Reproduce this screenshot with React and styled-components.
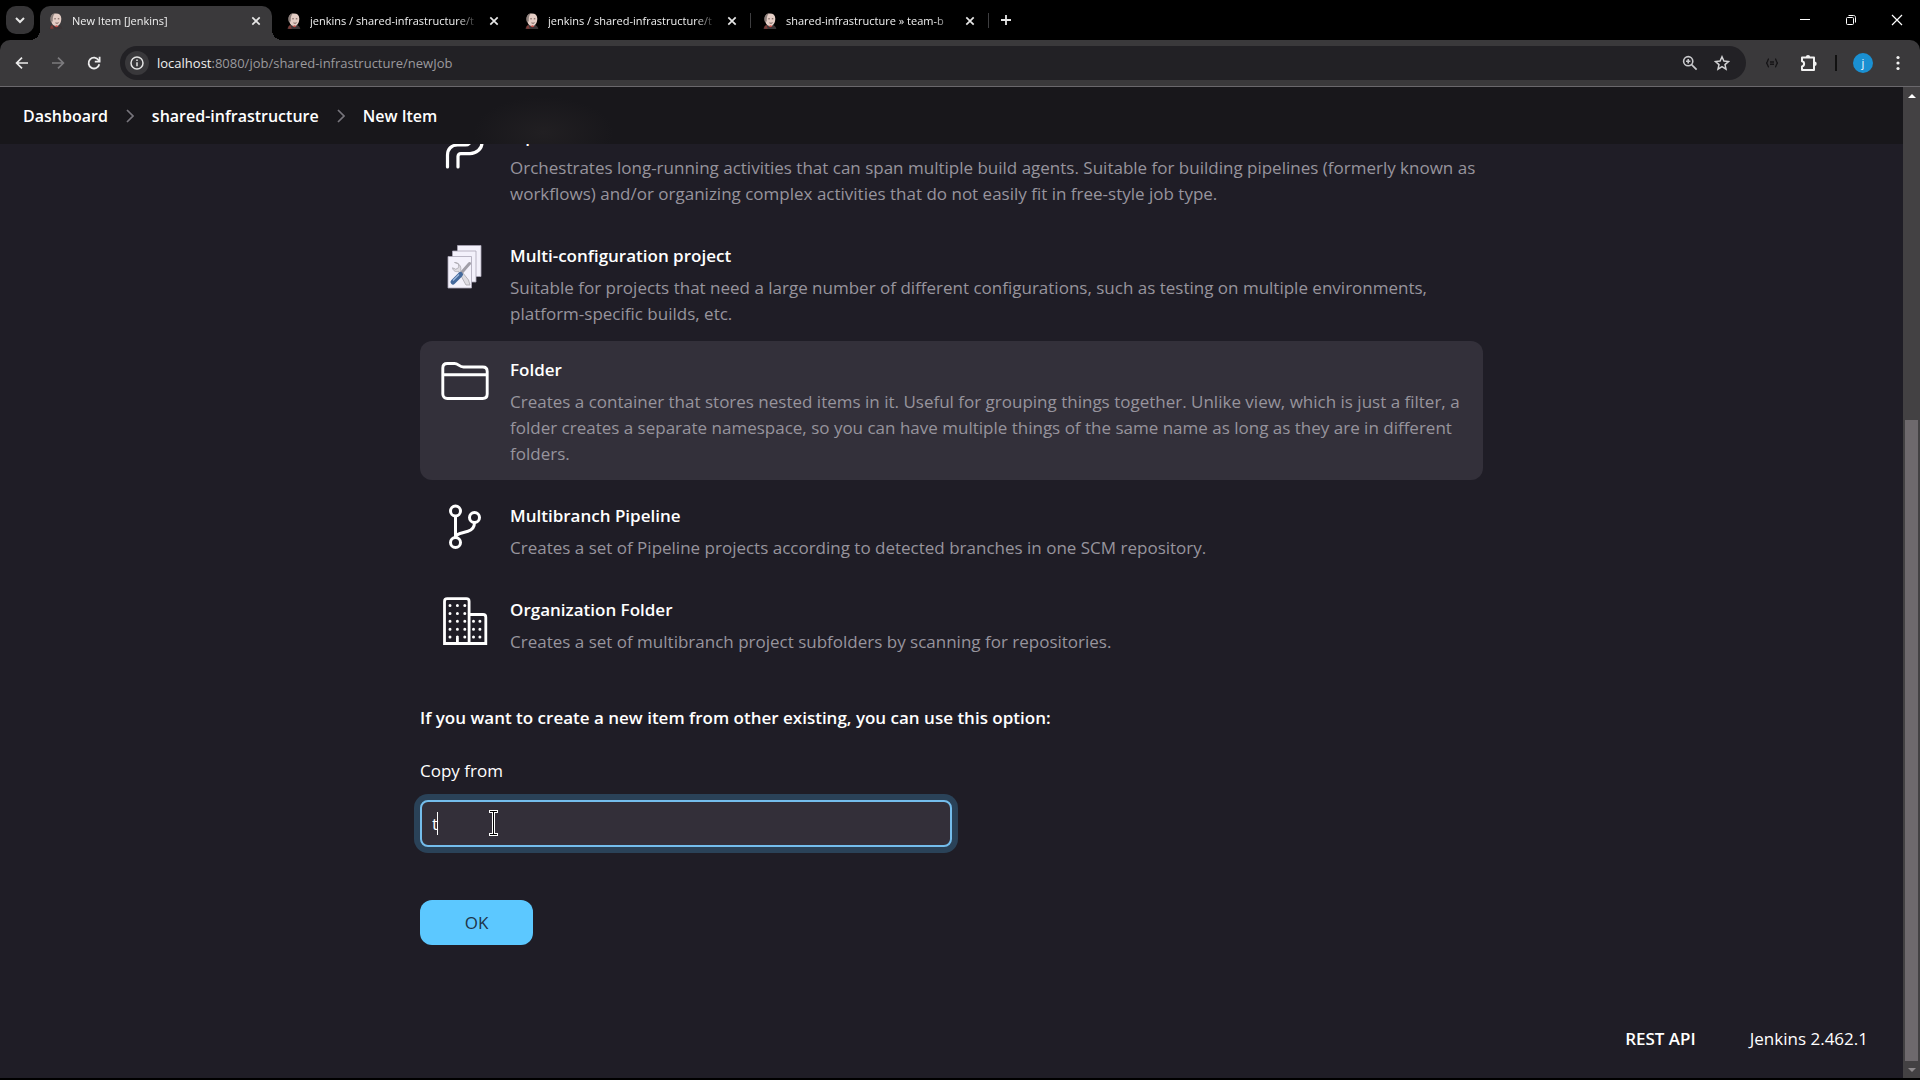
import { useState } from "react";
import styled, { createGlobalStyle } from "styled-components";

const tabs = [
  { id: 1, title: "New Item [Jenkins]", active: true },
  { id: 2, title: "jenkins / shared-infrastructure/t" },
  { id: 3, title: "jenkins / shared-infrastructure/t" },
  { id: 4, title: "shared-infrastructure » team-b" },
];

const Favicon = () => (
  <svg width="16" height="16" viewBox="0 0 16 16" aria-hidden="true">
    <path d="M1.5 16c.3-2.400 1.800-3.700 4-4.200h5c2 .6 3.400 1.800 3.800 4.200z" fill="#3a3436" />
    <path d="M2.200 15.800c0-2 .8-3.200 2.200-3.700l1.400 3.700z" fill="#7c3a36" />
    <path d="M2.800 5.200C2.800 2 5 .4 8 .4c3.400 0 5.300 1.900 5.300 5.200 0 4-1.900 7.600-5 7.600-3.200 0-5.500-3.600-5.500-8z" fill="#e4cdc5" />
    <path d="M2.600 8.500C1.600 4.300 3.400.7 7.300.3 5.400 1.800 4.600 3.800 4.800 8.500z" fill="#8c7f7b" />
    <path d="M6.300 5.800h1.500M9.800 5.800h1.500M7.500 9.900c1.200.5 2.200.4 3-.2" stroke="#5e4743" strokeWidth=".9" fill="none" />
    <path d="M6.300 13.200l2.200-1 2 1-1.900 1z" fill="#c9524c" />
  </svg>
);

const CloseIcon = () => (
  <svg width="10" height="10" viewBox="0 0 10 10" stroke="#e6e6e6" strokeWidth="1.700" aria-hidden="true">
    <path d="M1.300 1.300l7.400 7.400M8.700 1.300L1.300 8.700" />
  </svg>
);

const BackIcon = () => (
  <svg width="16" height="16" viewBox="0 0 16 16" fill="none" stroke="currentColor" strokeWidth="1.700" aria-hidden="true">
    <path d="M14 8H3M8 2.600L2.600 8 8 13.400" />
  </svg>
);

const ForwardIcon = () => (
  <svg width="16" height="16" viewBox="0 0 16 16" fill="none" stroke="currentColor" strokeWidth="1.700" aria-hidden="true">
    <path d="M2 8h11M8 2.600L13.400 8 8 13.400" />
  </svg>
);

const ReloadIcon = () => (
  <svg width="16" height="16" viewBox="0 0 16 16" fill="none" stroke="currentColor" strokeWidth="1.800" aria-hidden="true">
    <path d="M13.300 9.200A5.400 5.400 0 1 1 12.600 5.200L13.600 6.500" />
    <path d="M13.600 1.700v5H8.800" />
  </svg>
);

const InfoIcon = () => (
  <svg width="14" height="14" viewBox="0 0 14 14" fill="none" stroke="#e3e3e3" strokeWidth="1.500" aria-hidden="true">
    <circle cx="7" cy="7" r="6" />
    <path d="M7 6.300v4M7 3.600v1.400" />
  </svg>
);

const ZoomIcon = () => (
  <svg width="16" height="16" viewBox="0 0 16 16" fill="none" stroke="#c9c9cc" strokeWidth="1.600" aria-hidden="true">
    <circle cx="6.200" cy="6.200" r="4.600" />
    <path d="M9.600 9.600l5 5M6.200 4v4.400M4 6.200h4.400" />
  </svg>
);

const StarIcon = () => (
  <svg width="16" height="16" viewBox="0 0 16 16" fill="none" stroke="#d2d2d4" strokeWidth="1.500" aria-hidden="true">
    <path d="M8 1.800l1.900 4.300 4.600.4-3.500 3.100 1 4.500L8 11.700l-4 2.400 1-4.500L1.500 6.500l4.600-.4z" />
  </svg>
);

const BracesIcon = () => (
  <svg width="14" height="10" viewBox="0 0 14 10" fill="none" stroke="#161517" strokeWidth="1.400" aria-hidden="true">
    <path d="M4 1C2.200 1 3.200 5 1 5c2.200 0 1.200 4 3 4M10 1c1.800 0 .8 4 3 4-2.200 0-1.200 4-3 4M5 4h4M5 6.200h4" />
  </svg>
);

const PuzzleIcon = () => (
  <svg width="18" height="18" viewBox="0 0 18 18" fill="none" stroke="#f2f2f2" strokeWidth="2" aria-hidden="true">
    <path d="M2 3.500h12v12.500H2v-3.600c2.800-.4 2.800-4.800 0-5.200z" strokeLinejoin="round" />
    <path d="M5.800 3.200a2.200 2.200 0 0 1 4.400 0zM14.500 7.600a2.200 2.200 0 0 1 0 4.400z" fill="#f2f2f2" stroke="none" />
  </svg>
);

const PipelineIcon = () => (
  <svg width="48" height="48" viewBox="0 0 48 48" fill="none" stroke="#fff" strokeWidth="3.200" strokeLinecap="round" aria-hidden="true">
    <path d="M6.500 44V32c0-6 4-10 10-10h8c3 0 5-2 5-5V5" />
    <path d="M17 44V33.500c0-1.900 1-2.900 2.900-2.900H29c6 0 12-4.600 12-10.600V5" />
  </svg>
);

const MatrixIcon = () => (
  <svg width="48" height="48" viewBox="0 0 48 48" aria-hidden="true">
    <g fill="#f3f1fb" stroke="#a9a6b6" strokeWidth=".8">
      <path d="M16.500 2.500h23.500v31H16.500z" />
      <path d="M11.500 8h23.500v31H11.500z" />
      <path d="M7 13.500h23.500v31.500H7z" />
    </g>
    <path d="M13.500 19.500l4 1.500.3 3.500-3 1.800-3.300-1.500c.5 3.200 3.500 4.500 6 3.500L25 42h4l-1.500-5-7.800-9.800c1-4-2.500-8-6.200-7.700z" fill="#dedce2" stroke="#a7a5ac" strokeWidth=".8" />
    <path d="M28.500 20.500L18.500 32" stroke="#a09ea8" strokeWidth="3" strokeLinecap="round" />
    <path d="M19.500 31.500L12 39" stroke="#44699c" strokeWidth="5" strokeLinecap="round" />
    <path d="M18 31.500l-6 6" stroke="#9db8dc" strokeWidth="1.300" />
  </svg>
);

const FolderIcon = () => (
  <svg width="48" height="48" viewBox="0 0 48 48" fill="none" stroke="#fff" strokeWidth="2.900" strokeLinejoin="round" aria-hidden="true">
    <path d="M1.800 37V11c0-2.700 1.700-4.500 4.500-4.500h7.200c4 0 4.500 3.500 9 3.500h19.200c2.800 0 4.500 1.800 4.500 4.500V37c0 2.800-1.700 4.500-4.500 4.500H6.300c-2.800 0-4.500-1.700-4.500-4.500zM1.800 17.800h44.400" />
  </svg>
);

const BranchIcon = () => (
  <svg width="48" height="48" viewBox="0 0 48 48" fill="none" stroke="#fff" strokeWidth="3" aria-hidden="true">
    <circle cx="14.500" cy="8" r="5" />
    <circle cx="14.500" cy="39.500" r="5" />
    <circle cx="33.500" cy="14.500" r="5" />
    <path d="M14.500 13v21.500M33.500 19.500c0 4.500-2.500 7.500-6.500 8.700l-8 2.300c-3 .9-4.500 2.500-4.500 4" />
  </svg>
);

const BuildingIcon = () => (
  <svg width="48" height="48" viewBox="0 0 48 48" fill="none" stroke="#fff" strokeWidth="2.800" aria-hidden="true">
    <path d="M3.500 46.500V4.500c0-1.800 1-2.800 2.800-2.800h19c1.800 0 2.800 1 2.800 2.800v42zM28 17.500h14c1.800 0 2.800 1 2.800 2.800v26.200H28" />
    <path d="M9 8.500h15M9 16.500h15M9 24.300h15M9 32.200h15M9 40h15" strokeWidth="3" strokeDasharray="0 7.400" strokeLinecap="round" />
    <path d="M32.500 24.300h7M32.500 32.200h7M32.500 40h7" strokeWidth="3" strokeDasharray="0 6.400" strokeLinecap="round" />
    <path d="M16.400 41v5" />
  </svg>
);

const Chevron = () => (
  <svg width="8" height="14" viewBox="0 0 8 14" fill="none" stroke="#77757c" strokeWidth="1.700" aria-hidden="true">
    <path d="M1 1l6 6-6 6" />
  </svg>
);

const Pointer = () => (
  <svg width="11" height="28" viewBox="0 0 11 28" fill="none" aria-hidden="true">
    <path d="M1 2.500h9M1 25.500h9M5.500 2v24" stroke="#fff" strokeWidth="3" />
    <path d="M2 2.500h7M2 25.500h7M5.500 3v22" stroke="#000" strokeWidth="1" />
  </svg>
);

const items = [
  {
    name: "Pipeline",
    icon: <PipelineIcon />,
    text: "Orchestrates long-running activities that can span multiple build agents. Suitable for building pipelines (formerly known as workflows) and/or organizing complex activities that do not easily fit in free-style job type.",
  },
  {
    name: "Multi-configuration project",
    icon: <MatrixIcon />,
    tight: true,
    text: "Suitable for projects that need a large number of different configurations, such as testing on multiple environments, platform-specific builds, etc.",
  },
  {
    name: "Folder",
    icon: <FolderIcon />,
    selected: true,
    text: "Creates a container that stores nested items in it. Useful for grouping things together. Unlike view, which is just a filter, a folder creates a separate namespace, so you can have multiple things of the same name as long as they are in different folders.",
  },
  {
    name: "Multibranch Pipeline",
    icon: <BranchIcon />,
    text: "Creates a set of Pipeline projects according to detected branches in one SCM repository.",
  },
  {
    name: "Organization Folder",
    icon: <BuildingIcon />,
    text: "Creates a set of multibranch project subfolders by scanning for repositories.",
  },
];

const App = () => {
  const [copyFrom, setCopyFrom] = useState("t");

  return (
    <>
      <GlobalStyle />
      <Window>
        <TabStrip>
          <TabSearch type="button" aria-label="Search tabs">
            <svg width="10" height="7" viewBox="0 0 10 7" fill="none" stroke="#e6e6e6" strokeWidth="2">
              <path d="M1 1l4 4 4-4" />
            </svg>
          </TabSearch>
          {tabs.map((tab) => (
            <Tab key={tab.id} $active={tab.active}>
              <Favicon />
              <TabTitle>{tab.title}</TabTitle>
              <TabClose type="button" aria-label="Close tab">
                <CloseIcon />
              </TabClose>
            </Tab>
          ))}
          <NewTab type="button" aria-label="New tab">
            <svg width="12" height="12" viewBox="0 0 12 12" stroke="#e6e6e6" strokeWidth="1.800">
              <path d="M6 1v10M1 6h10" />
            </svg>
          </NewTab>
          <WindowControls>
            <WindowButton type="button" aria-label="Minimize">
              <svg width="12" height="12" viewBox="0 0 12 12" stroke="#fff">
                <path d="M1 5.500h10" />
              </svg>
            </WindowButton>
            <WindowButton type="button" aria-label="Restore">
              <svg width="12" height="12" viewBox="0 0 12 12" fill="none" stroke="#fff">
                <rect x="1.500" y="3.500" width="7" height="7" rx="1" />
                <path d="M3.500 1.500h5c1.300 0 2 .7 2 2v5" />
              </svg>
            </WindowButton>
            <WindowButton type="button" aria-label="Close">
              <svg width="12" height="12" viewBox="0 0 12 12" stroke="#fff" strokeWidth="1.200">
                <path d="M1 1l10 10M11 1L1 11" />
              </svg>
            </WindowButton>
          </WindowControls>
        </TabStrip>

        <Toolbar>
          <ToolButton type="button" aria-label="Back"><BackIcon /></ToolButton>
          <ToolButton type="button" aria-label="Forward" $dim><ForwardIcon /></ToolButton>
          <ToolButton type="button" aria-label="Reload"><ReloadIcon /></ToolButton>
          <AddressBar>
            <SiteInfo type="button" aria-label="Site information"><InfoIcon /></SiteInfo>
            <Address><b>localhost</b>:8080/job/shared-infrastructure/newJob</Address>
            <BarButton type="button" aria-label="Zoom"><ZoomIcon /></BarButton>
            <BarButton type="button" aria-label="Bookmark"><StarIcon /></BarButton>
          </AddressBar>
          <Extensions>
            <BarButton type="button" aria-label="Extension"><BracesIcon /></BarButton>
            <BarButton type="button" aria-label="Extensions"><PuzzleIcon /></BarButton>
            <Divider />
            <Avatar type="button">j</Avatar>
            <MenuButton type="button" aria-label="Menu">
              <svg width="4" height="16" viewBox="0 0 4 16" fill="#f2f2f2">
                <circle cx="2" cy="2.500" r="1.600" />
                <circle cx="2" cy="8" r="1.600" />
                <circle cx="2" cy="13.500" r="1.600" />
              </svg>
            </MenuButton>
          </Extensions>
        </Toolbar>

        <Viewport>
          <Page>
            <Breadcrumbs aria-label="Breadcrumb">
              <Crumb href="#dashboard">Dashboard</Crumb>
              <Chevron />
              <Crumb href="#folder">shared-infrastructure</Crumb>
              <Chevron />
              <Crumb href="#new">New Item</Crumb>
            </Breadcrumbs>
            <Form onSubmit={(e) => e.preventDefault()}>
              <Items>
                {items.map((item) => (
                  <Item key={item.name} $selected={item.selected} $tight={item.tight}>
                    {item.icon}
                    <div>
                      <ItemName>{item.name}</ItemName>
                      <ItemText>{item.text}</ItemText>
                    </div>
                  </Item>
                ))}
              </Items>
              <CopyHeading>If you want to create a new item from other existing, you can use this option:</CopyHeading>
              <CopyLabel htmlFor="from">Copy from</CopyLabel>
              <Field>
                <CopyInput id="from" autoComplete="off" value={copyFrom} onChange={(e) => setCopyFrom(e.target.value)} />
                <Caret />
                <PointerSpot><Pointer /></PointerSpot>
              </Field>
              <OkButton type="submit">OK</OkButton>
            </Form>
            <Footer>
              <RestLink href="#api">REST API</RestLink>
              <span>Jenkins 2.462.1</span>
            </Footer>
          </Page>
          <Scrollbar>
            <Arrow $up />
            <Track>
              <Thumb />
            </Track>
            <Arrow />
          </Scrollbar>
        </Viewport>
      </Window>
    </>
  );
};

export default App;

const GlobalStyle = createGlobalStyle`
* {
  box-sizing: border-box;
}
body {
  margin: 0;
  background: #000;
  font-family: "Open Sans", "Noto Sans", sans-serif;
}
button {
  padding: 0;
  border: 0;
  background: none;
  font-family: inherit;
}
svg {
  display: block;
  flex: none;
}
`

const Window = styled.div`
display: flex;
flex-direction: column;
height: 100vh;
padding-bottom: 2px;
overflow: hidden;
`

const TabStrip = styled.div`
display: flex;
align-items: center;
height: 40px;
padding-left: 6px;
`

const TabSearch = styled.button`
display: flex;
align-items: center;
justify-content: center;
width: 28px;
height: 28px;
margin-right: 6px;
border-radius: 10px;
background: #363537;
`

const Tab = styled.div`
position: relative;
display: flex;
align-items: center;
align-self: flex-end;
gap: 8px;
width: ${(p) => (p.$active ? 232 : 238)}px;
height: 34px;
padding: 0 ${(p) => (p.$active ? 8 : 11)}px 4px ${(p) => (p.$active ? 8 : 11)}px;
border-radius: 10px 10px 0 0;
background: ${(p) => (p.$active ? "#3a393b" : "transparent")};
& + &::after {
  content: "";
  position: absolute;
  right: 0;
  top: 7px;
  width: 1px;
  height: 15px;
  background: #3e3e40;
}
${(p) => p.$active && `
margin-right: 3px;
&::before,
&::after {
  content: "";
  position: absolute;
  bottom: 0;
  width: 10px;
  height: 10px;
}
&::before {
  left: -10px;
  background: radial-gradient(circle at 0 0, transparent 10px, #3a393b 10px);
}
&::after {
  right: -10px;
  background: radial-gradient(circle at 100% 0, transparent 10px, #3a393b 10px);
}
`}
`

const TabTitle = styled.span`
flex: 1;
overflow: hidden;
color: #f0f0f0;
font-size: 11px;
line-height: 18px;
white-space: nowrap;
mask-image: linear-gradient(to right, #000 calc(100% - 20px), transparent);
`

const TabClose = styled.button`
display: flex;
align-items: center;
justify-content: center;
width: 16px;
height: 16px;
`

const NewTab = styled(TabClose)`
width: 34px;
height: 28px;
`

const WindowControls = styled.div`
display: flex;
margin-left: auto;
`

const WindowButton = styled.button`
display: flex;
align-items: center;
justify-content: center;
width: 46px;
height: 40px;
`

const Toolbar = styled.div`
display: flex;
align-items: center;
height: 47px;
padding: 0 14px 1px 4px;
border-bottom: 1px solid #6a686c;
border-radius: 10px 10px 0 0;
background: #3a393b;
`

const ToolButton = styled.button`
display: flex;
align-items: center;
justify-content: center;
width: 36px;
height: 34px;
color: ${(p) => (p.$dim ? "#7c7b7e" : "#ececec")};
`

const AddressBar = styled.div`
display: flex;
flex: 1;
align-items: center;
height: 34px;
margin-left: 8px;
padding: 0 8px 0 5px;
border-radius: 17px;
background: #222125;
`

const SiteInfo = styled.button`
display: flex;
align-items: center;
justify-content: center;
width: 24px;
height: 24px;
margin-right: 8px;
border-radius: 50%;
background: #39383b;
`

const Address = styled.span`
flex: 1;
color: #9b9a9e;
font-size: 13px;
line-height: 20px;
b {
  color: #f0f0f0;
  font-weight: 400;
}
`

const BarButton = styled.button`
display: flex;
align-items: center;
justify-content: center;
width: 32px;
height: 32px;
`

const Extensions = styled.div`
display: flex;
align-items: center;
padding-left: 10px;
gap: 5px;
`

const Divider = styled.div`
width: 2px;
height: 16px;
margin: 0 11px 0 5px;
background: #111;
`

const Avatar = styled.button`
width: 20px;
height: 20px;
margin-right: 12px;
border-radius: 50%;
background: #1a90d2;
color: #fff;
font-size: 11px;
line-height: 18px;
`

const MenuButton = styled.button`
display: flex;
justify-content: center;
width: 16px;
`

const Viewport = styled.div`
display: flex;
flex: 1;
min-height: 0;
background: #1f1d26;
`

/* the page is scrolled to its end, so its top runs off under the breadcrumbs */
const Page = styled.div`
position: relative;
display: flex;
flex: 1;
flex-direction: column;
justify-content: flex-end;
overflow: hidden;
color: #fff;
font-size: 17px;
line-height: 26px;
`

/* the glow is the item name shining through the frosted bar */
const Breadcrumbs = styled.nav`
position: absolute;
top: 0;
left: 0;
right: 0;
z-index: 1;
display: flex;
align-items: center;
gap: 18px;
height: 57px;
padding: 0 23px;
background: radial-gradient(ellipse 70px 36px at calc(50% - 408px) 80%, #211f22, #18171b);
`

const Crumb = styled.a`
color: #fff;
font-size: 16px;
font-weight: 600;
text-decoration: none;
`

const Form = styled.form`
width: 100%;
max-width: 1063px;
margin: 0 auto;
`

const Items = styled.ul`
display: grid;
gap: 7px;
margin: 0;
padding: 0;
list-style: none;
`

const Item = styled.li`
display: flex;
gap: 21px;
padding: 16px 3px ${(p) => (p.$tight ? 7 : 13)}px 21px;
border-radius: 12px;
background: ${(p) => (p.$selected ? "#33303a" : "transparent")};
`

const ItemName = styled.div`
margin-bottom: 6px;
font-weight: 600;
`

const ItemText = styled.div`
color: #97949d;
`

const CopyHeading = styled.div`
margin-top: 37px;
font-weight: 600;
`

const CopyLabel = styled.label`
display: block;
margin-top: 27px;
`

const Field = styled.div`
position: relative;
width: 50%;
margin-top: 16px;
`

const CopyInput = styled.input`
display: block;
width: 100%;
height: 47px;
padding: 0 10px;
border: 2px solid #74bdec;
border-radius: 8px;
outline: none;
background: #332f39;
box-shadow: 0 0 0 6px #2a4258;
color: #fff;
font: inherit;
`

const Caret = styled.span`
position: absolute;
top: 12px;
left: 17px;
width: 1px;
height: 23px;
background: #fff;
`

const PointerSpot = styled.span`
position: absolute;
top: 9px;
left: 68px;
`

const OkButton = styled.button`
width: 113px;
height: 45px;
margin-top: 53px;
border-radius: 12px;
background: #5cc8ff;
color: #1f3448;
font-size: 17px;
`

const Footer = styled.footer`
display: flex;
justify-content: flex-end;
gap: 54px;
padding: 81px 35px 26px;
`

const RestLink = styled(Crumb)`
font-size: 17px;
`

const Scrollbar = styled.div`
display: flex;
flex-direction: column;
width: 17px;
background: #434143;
`

const Arrow = styled.div`
display: flex;
align-items: center;
justify-content: center;
height: 17px;
&::before {
  content: "";
  border: 4px solid transparent;
  border-top-width: ${(p) => (p.$up ? 0 : 4)}px;
  border-bottom-width: ${(p) => (p.$up ? 4 : 0)}px;
  border-top-color: #8d898c;
  border-bottom-color: #fff;
}
`

const Track = styled.div`
display: flex;
flex: 1;
flex-direction: column;
justify-content: flex-end;
padding: 0 2px;
`

const Thumb = styled.div`
height: 67%;
background: #6e696d;
`
